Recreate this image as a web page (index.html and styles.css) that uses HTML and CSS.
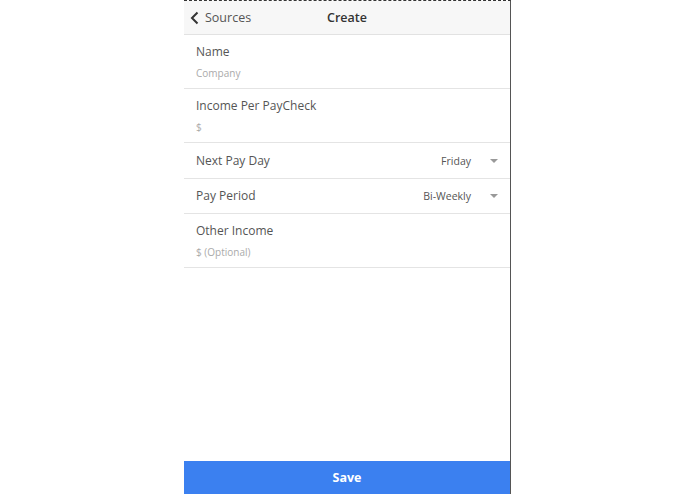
FILE: index.html
```html
<!DOCTYPE html>
<html lang="en">
<head>
    <meta charset="UTF-8">
    <title>Create Source</title>
    <link rel="stylesheet" href="styles.css">
</head>
<body>
    <div class="phone">
        <div class="nav-bar">
            <a class="back-link">
                <svg class="chevron" width="9" height="14" viewBox="0 0 9 14"><path d="M7.5 1.5 L2 7 L7.5 12.5" fill="none" stroke="#333" stroke-width="2"/></svg>
                Sources
            </a>
            <span class="nav-title">Create</span>
        </div>

        <div class="form-list">
            <div class="field">
                <label>Name</label>
                <input type="text" placeholder="Company">
            </div>
            <div class="field">
                <label>Income Per PayCheck</label>
                <input type="text" placeholder="$">
            </div>
            <div class="field select-field">
                <label>Next Pay Day</label>
                <span class="select-value">Friday</span>
                <span class="caret"></span>
            </div>
            <div class="field select-field">
                <label>Pay Period</label>
                <span class="select-value">Bi-Weekly</span>
                <span class="caret"></span>
            </div>
            <div class="field">
                <label>Other Income</label>
                <input type="text" placeholder="$ (Optional)">
            </div>
        </div>

        <button class="save-button">Save</button>
    </div>
</body>
</html>
```

FILE: styles.css
```css
body {
    margin: 0;
    background-color: #ffffff;
    font-family: "Open Sans", Arial, sans-serif;
    color: #444;
    height: 494px;
    overflow: hidden;
}
.phone {
    width: 327px;
    height: 494px;
    margin-left: 184px;
    border-right: 1px solid #555;
    border-top: 1px dashed #333;
    box-sizing: border-box;
    display: flex;
    flex-direction: column;
}
.nav-bar {
    height: 33px;
    background-color: #f7f7f7;
    border-bottom: 1px solid #e2e2e2;
    display: flex;
    align-items: center;
    position: relative;
    flex-shrink: 0;
}
.back-link {
    display: flex;
    align-items: center;
    gap: 6px;
    padding-left: 6px;
    font-size: 12.5px;
    color: #555;
}
.nav-title {
    position: absolute;
    left: 0;
    right: 0;
    text-align: center;
    font-size: 12.5px;
    font-weight: 600;
    color: #333;
    pointer-events: none;
}
.form-list {
    flex: 1;
}
.field {
    border-bottom: 1px solid #e4e4e4;
    padding: 7px 12px 7px 12px;
    display: flex;
    flex-direction: column;
}
.field label {
    font-size: 12px;
    color: #555;
    line-height: 20px;
}
.field input {
    border: none;
    outline: none;
    padding: 0;
    margin-top: 3px;
    font-family: inherit;
    font-size: 10px;
    line-height: 16px;
    color: #444;
}
.field input::placeholder {
    color: #aaa;
}
.select-field {
    flex-direction: row;
    align-items: center;
    height: 36px;
    padding: 0 12px;
    box-sizing: border-box;
}
.select-field + .select-field {
    height: 35px;
}
.select-field label {
    flex: 1;
}
.select-value {
    font-size: 10.5px;
    color: #555;
    margin-right: 19px;
}
.caret {
    width: 0;
    height: 0;
    border-left: 4px solid transparent;
    border-right: 4px solid transparent;
    border-top: 4px solid #999;
}
.save-button {
    height: 33px;
    border: none;
    background-color: #3b80f0;
    color: #ffffff;
    font-family: inherit;
    font-size: 12.5px;
    font-weight: 700;
    flex-shrink: 0;
}
```
